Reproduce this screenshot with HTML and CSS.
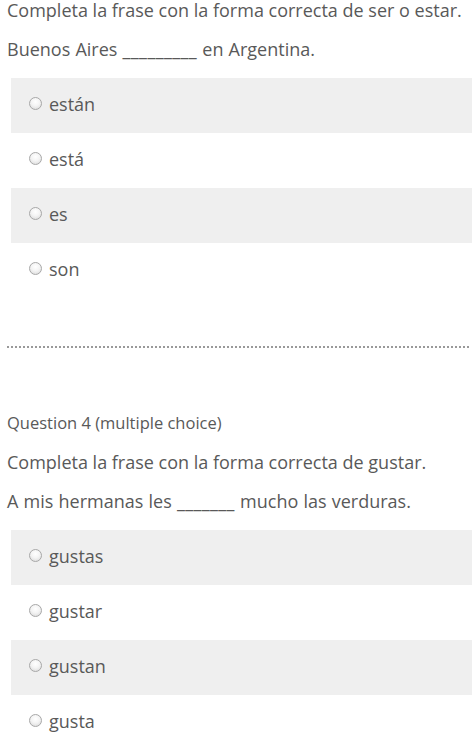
FILE: index.html
```html
<!DOCTYPE html>
<html lang="es">
<head>
<meta charset="utf-8">
<link rel="stylesheet" href="styles.css">
</head>
<body>
<div class="page">
  <section class="question first">
    <p class="prompt">Completa la frase con la forma correcta de ser o estar.</p>
    <p class="sentence">Buenos Aires <span class="blank">_________</span> en Argentina.</p>
    <ul class="options">
      <li class="opt shaded"><input type="radio" name="q3" class="radio"><span>están</span></li>
      <li class="opt"><input type="radio" name="q3" class="radio"><span>está</span></li>
      <li class="opt shaded"><input type="radio" name="q3" class="radio"><span>es</span></li>
      <li class="opt"><input type="radio" name="q3" class="radio"><span>son</span></li>
    </ul>
  </section>
  <div class="divider"></div>
  <section class="question">
    <p class="qlabel">Question 4 (multiple choice)</p>
    <p class="prompt">Completa la frase con la forma correcta de gustar.</p>
    <p class="sentence">A mis hermanas les <span class="blank">_______</span> mucho las verduras.</p>
    <ul class="options">
      <li class="opt shaded"><input type="radio" name="q4" class="radio"><span>gustas</span></li>
      <li class="opt"><input type="radio" name="q4" class="radio"><span>gustar</span></li>
      <li class="opt shaded"><input type="radio" name="q4" class="radio"><span>gustan</span></li>
      <li class="opt"><input type="radio" name="q4" class="radio"><span>gusta</span></li>
    </ul>
  </section>
</div>
</body>
</html>
```

FILE: styles.css
```css
html, body {
  margin: 0;
  padding: 0;
  background: #fff;
  overflow: hidden;
}
.page {
  font-family: "Open Sans", "DejaVu Sans", sans-serif;
  color: #595959;
  font-size: 18px;
  padding: 0 0 0 7px;
  display: flex;
  flex-direction: column;
}
.question {
  display: flex;
  flex-direction: column;
}
p {
  margin: 0;
  line-height: 24px;
  white-space: nowrap;
}
.first .prompt {
  margin-top: -2px;
}
.sentence {
  margin-top: 15px;
  word-spacing: 0.5px;
}
.blank {
  letter-spacing: 0.4px;
}
.qlabel {
  font-size: 16.5px;
  margin-top: 63px;
}
.qlabel + .prompt {
  margin-top: 15px;
}
.options {
  list-style: none;
  margin: 17px 0 0 4px;
  padding: 0;
}
.opt {
  height: 55px;
  display: flex;
  align-items: center;
  padding-left: 18px;
  padding-bottom: 4px;
  box-sizing: border-box;
}
.opt.shaded {
  background: #efefef;
}
.opt span {
  line-height: 24px;
}
.radio {
  appearance: none;
  -webkit-appearance: none;
  margin: 0 7px 0 0;
  width: 13px;
  height: 13px;
  border-radius: 50%;
  border: 1px solid #a8a8a8;
  background: radial-gradient(circle at 50% 35%, #ffffff 0%, #f4f4f4 45%, #d6d6d6 100%);
  box-sizing: border-box;
  flex: none;
}
.divider {
  height: 2px;
  margin: 48px 2px 0 0;
  background-image: repeating-linear-gradient(to right, #999 0, #999 2px, transparent 2px, transparent 4px);
}
```
